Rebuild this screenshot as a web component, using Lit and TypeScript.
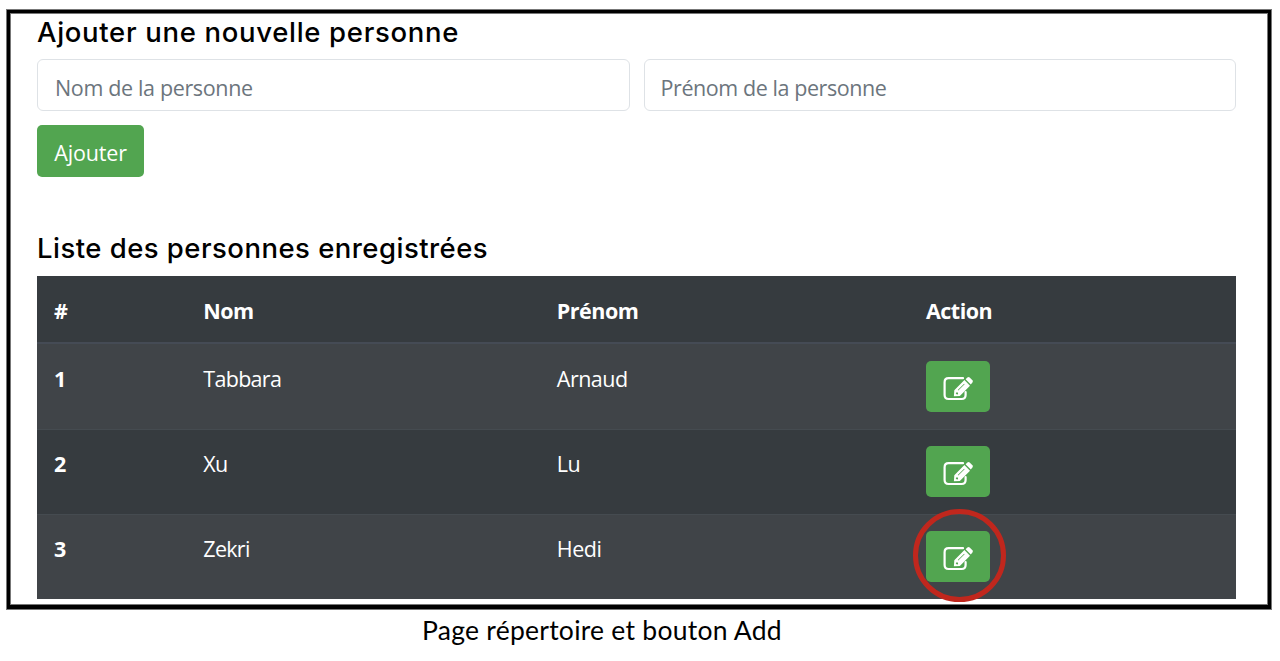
import { html, css, svg, LitElement } from "lit"
import { customElement, property, state } from "lit/decorators.js"
import { classMap } from "lit/directives/class-map.js"

interface Person {
  id: number
  nom: string
  prenom: string
}

const editIcon = svg`
  <path class="sheet" d="M20 2.2H5.6Q1.6 2.2 1.6 6.2V19Q1.6 23 5.6 23H18.6Q22.6 23 22.6 19V16" />
  <path class="pencil" fill-rule="evenodd" d="M10.9 20.3L11.3 14.3L21.4 4.1L27 9.7L16.8 20ZM13.1 16.4L14.9 16.6L15.1 18.2L13.9 18.6L12.8 17.6ZM14.8 14L21.1 7.7L21.6 8.2L15.3 14.5Z" />
  <path class="pencil" d="M22.6 3.3L24.4 1.5Q25.6 0.6 26.7 1.6L29.4 4.3Q30.4 5.4 29.4 6.6L27.8 8.5Z" />
`

@customElement("edit-button")
class EditButton extends LitElement {

  static styles = css`
  :host {
    display: block;
    position: relative;
    width: 64px;
    height: 51px;
  }

  button {
    display: flex;
    justify-content: center;
    align-items: center;
    width: 100%;
    height: 100%;
    padding: 5px 0 0 1px;
    border: none;
    border-radius: 5px;
    background-color: #52a550;
    cursor: pointer;
  }

  svg {
    width: 31px;
    height: 26px;
  }

  .sheet {
    fill: none;
    stroke: #fff;
    stroke-width: 2.2;
    stroke-linecap: round;
  }

  .pencil {
    fill: #fff;
  }

  .circled::after {
    content: "";
    position: absolute;
    left: -13px;
    top: -22px;
    width: 93px;
    height: 93px;
    box-sizing: border-box;
    border: 5px solid #c0271d;
    border-radius: 50%;
    pointer-events: none;
  }
`

  @property({ type: Boolean }) circled = false

  render() {
    return html`
    <button class=${classMap({ circled: this.circled })} aria-label="Modifier">
      <svg viewBox="0 0 31 26">${editIcon}</svg>
    </button>
    `
  }
}

@customElement("app-root")
class AppRoot extends LitElement {

  static styles = css`
  :host {
    display: block;
    height: 661px;
    overflow: hidden;
    box-sizing: border-box;
    padding: 10px 9px 0 7px;
    background-color: #fff;
    color: #000;
    font-family: "Open Sans", "Noto Sans", sans-serif;
    font-size: 21.5px;
    letter-spacing: -0.35px;
  }

  .frame {
    box-sizing: border-box;
    height: 599px;
    border: 3px solid #000;
    border-bottom-width: 4px;
    padding: 0 32px 0 27px;
    box-shadow: 0 0 0 1px #777, inset 0 0 0 1px #777;
  }

  h2 {
    margin: 0;
    font-family: Inter, sans-serif;
    font-size: 27.5px;
    font-weight: 500;
    line-height: 38px;
    padding-bottom: 2px;
    white-space: nowrap;
  }

  .form-title {
    letter-spacing: 0.68px;
  }

  .list-title {
    margin-top: 52px;
    letter-spacing: 0.47px;
  }

  form {
    display: grid;
    grid-template-columns: 1fr 1fr;
    gap: 14px;
    margin-top: 6px;
  }

  input {
    box-sizing: border-box;
    width: 100%;
    height: 52px;
    padding: 4px 17px 0;
    border: 1.4px solid #dee2e6;
    border-radius: 6px;
    font: inherit;
    letter-spacing: inherit;
    outline: none;
  }

  input::placeholder {
    color: #6c757d;
    opacity: 1;
  }

  .prenom-input {
    padding-left: 16px;
    letter-spacing: -0.42px;
  }

  .add {
    justify-self: start;
    width: 107px;
    height: 52px;
    padding: 2px 0 0;
    border: none;
    border-radius: 5px;
    background-color: #52a550;
    color: #fff;
    font: inherit;
    letter-spacing: -0.15px;
  }

  .table {
    margin-top: 7px;
    background-color: #363b3f;
    color: #fff;
  }

  .row {
    display: grid;
    grid-template-columns: 149.3px 353.5px 369.2px 1fr;
    height: 85px;
    box-sizing: border-box;
    padding: 16px 17px 0;
    border-top: 1px solid #454b50;
    line-height: 36px;
  }

  .row.head {
    height: 66px;
    padding-top: 17px;
    border-top: none;
    font-weight: 700;
    letter-spacing: -0.5px;
  }

  .row.first {
    height: 87px;
    padding-top: 17px;
    border-top: 2px solid #454b55;
  }

  .row.striped {
    background-color: #404448;
  }

  .number {
    font-weight: 700;
  }

  .nom {
    letter-spacing: -0.7px;
  }

  .prenom {
    letter-spacing: -0.5px;
  }

  .caption {
    width: 1190px;
    margin-top: 5px;
    text-align: center;
    font-family: Lato, sans-serif;
    font-size: 26.5px;
    line-height: 32px;
    letter-spacing: 0.25px;
  }
`

  @state() private people: Person[] = [
    { id: 1, nom: "Tabbara", prenom: "Arnaud" },
    { id: 2, nom: "Xu", prenom: "Lu" },
    { id: 3, nom: "Zekri", prenom: "Hedi" }
  ]

  renderPerson(person: Person, index: number) {
    const classes = { row: true, first: index === 0, striped: index % 2 === 0 }
    return html`
    <div class=${classMap(classes)}>
      <span class="number">${person.id}</span>
      <span class="nom">${person.nom}</span>
      <span class="prenom">${person.prenom}</span>
      <edit-button ?circled=${person.id === 3}></edit-button>
    </div>
    `
  }

  render() {
    return html`
    <div class="frame">
      <h2 class="form-title">Ajouter une nouvelle personne</h2>
      <form @submit=${this.handleSubmit}>
        <input class="nom-input" placeholder="Nom de la personne" />
        <input class="prenom-input" placeholder="Prénom de la personne" />
        <button class="add">Ajouter</button>
      </form>
      <h2 class="list-title">Liste des personnes enregistrées</h2>
      <div class="table">
        <div class="row head">
          <span>#</span>
          <span>Nom</span>
          <span>Prénom</span>
          <span>Action</span>
        </div>
        ${this.people.map((person, index) => this.renderPerson(person, index))}
      </div>
    </div>
    <div class="caption">Page répertoire et bouton Add</div>
    `
  }

  handleSubmit(e: Event) {
    e.preventDefault()
  }
}
